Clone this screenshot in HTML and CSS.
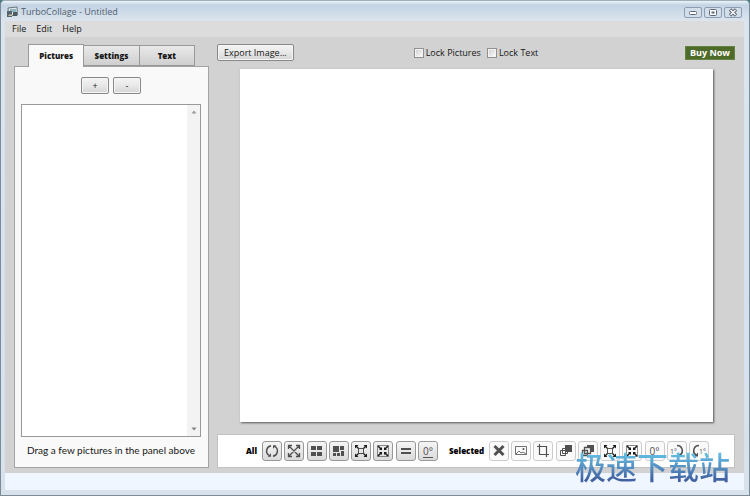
FILE: index.html
```
<!DOCTYPE html>
<html lang="en">
<head>
<meta charset="utf-8">
<title>TurboCollage - Untitled</title>
<link rel="stylesheet" href="styles.css">
</head>
<body>
<svg class="defs" aria-hidden="true">
  <symbol id="expand" viewBox="0 0 20 20">
    <path fill="none" stroke="currentColor" stroke-opacity=".75" d="M7.500 7.500h5v5h-5z"/>
    <path stroke="currentColor" stroke-width="1.300" d="M7.500 7.500L5 5M12.500 7.500L15 5M7.500 12.500L5 15M12.500 12.500L15 15"/>
    <path fill="currentColor" d="M4 4h3.500L4 7.500zM16 4v3.500L12.500 4zM4 16v-3.500L7.500 16zM16 16h-3.500l3.500-3.500z"/>
  </symbol>
  <symbol id="fit" viewBox="0 0 20 20">
    <path d="M4.500 4.500h11v11h-11z" fill="none" stroke="currentColor" stroke-opacity=".5"/>
    <path d="M5 5l3 3M15 5l-3 3M5 15l3-3M15 15l-3-3" stroke="currentColor" stroke-width="1.500"/>
    <path fill="currentColor" d="M9 9H6l3-3zM11 9V6l3 3zM9 11v3l-3-3zM11 11h3l-3 3z"/>
  </symbol>
</svg>
<div class="window">
  <header class="titlebar">
    <svg class="logo" viewBox="0 0 12 12"><path d="M2 2l9-1 .5 8-9 1z" fill="#dfe6e8" stroke="#66747c"/><path d="M4 3h6v3H4z" fill="#8fb5c5"/><path d="M1 5h5v6H1z" fill="#53646b"/><path d="M2 10l2-2 1 1 1-1v2z" fill="#d0c0a8"/><path d="M7 6h4v4H7z" fill="#4b5b61"/></svg>
    <h1 class="title">TurboCollage - Untitled</h1>
    <div class="controls">
      <button class="control" aria-label="Minimize"><svg viewBox="0 0 16 9"><rect x="4.500" y="3.500" width="7" height="3" rx="1" fill="#fff" stroke="#5f6878"/></svg></button>
      <button class="control" aria-label="Maximize"><svg viewBox="0 0 16 9"><rect x="4.500" y="1.500" width="7" height="6" rx="1" fill="#fff" stroke="#5f6878"/><rect x="7" y="4" width="2" height="1" fill="#fff" stroke="#5f6878"/></svg></button>
      <button class="control" aria-label="Close"><svg viewBox="0 0 16 9"><path d="M5 1.500l6 6M11 1.500l-6 6" stroke="#5f6878" stroke-width="3.400"/><path d="M5.500 2l5 5M10.500 2l-5 5" stroke="#fff" stroke-width="1.400"/></svg></button>
    </div>
  </header>
  <nav class="menubar">
    <button class="menu">File</button><button class="menu">Edit</button><button class="menu">Help</button>
  </nav>
  <main class="workspace">
    <section class="sidebar">
      <div class="tabs" role="tablist">
        <button class="tab active" role="tab" aria-selected="true">Pictures</button>
        <button class="tab" role="tab" aria-selected="false">Settings</button>
        <button class="tab" role="tab" aria-selected="false">Text</button>
      </div>
      <div class="panel">
        <div class="edit">
          <button class="push small" aria-label="Add picture">+</button>
          <button class="push small" aria-label="Remove picture">-</button>
        </div>
        <div class="list">
          <div class="scroll">
            <svg viewBox="0 0 6 4"><path d="M.5 3.500L3 .500l2.500 3z" fill="#9a9a9a"/></svg>
            <svg viewBox="0 0 6 4"><path d="M.5.500L3 3.500 5.500.500z" fill="#808080"/></svg>
          </div>
        </div>
        <p class="hint">Drag a few pictures in the panel above</p>
      </div>
    </section>
    <section class="editor">
      <div class="actions">
        <button class="push">Export Image...</button>
        <div class="locks">
          <label class="lock"><input type="checkbox">Lock Pictures</label>
          <label class="lock"><input type="checkbox">Lock Text</label>
        </div>
        <button class="buy">Buy Now</button>
      </div>
      <div class="canvas"></div>
      <div class="toolbar">
        <span class="caption all">All</span>
        <div class="tools">
          <button class="tool" aria-label="Shuffle"><svg viewBox="0 0 20 20"><path d="M9 4.700A5.400 5.400 0 0 0 7 14.500M11 15.300A5.400 5.400 0 0 0 13 5.500" fill="none" stroke="currentColor" stroke-width="1.500"/><path d="M5.500 15.800H9v-3.500zM14.500 4.200H11v3.500z" fill="currentColor"/></svg></button>
          <button class="tool" aria-label="Scatter"><svg viewBox="0 0 20 20"><path d="M5 5l10 10M15 5L5 15M4.500 8V4.500H8M12 4.500h3.500V8M4.500 12v3.500H8M12 15.500h3.500V12" fill="none" stroke="currentColor" stroke-width="1.300"/></svg></button>
          <button class="tool" aria-label="Grid"><svg viewBox="0 0 20 20"><path d="M4 5h5v4H4zM10 5h5v4h-5zM4 11h5v4H4zM10 11h5v4h-5z" fill="currentColor"/></svg></button>
          <button class="tool" aria-label="Mosaic"><svg viewBox="0 0 20 20"><path d="M4 5h6v6H4zM11 5h4v4h-4zM4 12h3v3H4zM8 12h3v3H8zM12 10h3v5h-3z" fill="currentColor"/></svg></button>
          <button class="tool dark" aria-label="Expand all"><svg><use href="#expand"/></svg></button>
          <button class="tool dark" aria-label="Fit all"><svg><use href="#fit"/></svg></button>
          <button class="tool" aria-label="Equalize"><svg viewBox="0 0 20 20"><path d="M5 7h10v2H5zM5 11h10v2H5z" fill="currentColor"/></svg></button>
          <button class="tool angle" aria-label="Reset rotation of all"><span>0°</span></button>
        </div>
        <span class="caption second">Selected</span>
        <div class="tools flat">
          <button class="tool" aria-label="Delete"><svg viewBox="0 0 20 20"><path d="M5.500 5l9 9M14.500 5l-9 9" stroke="currentColor" stroke-width="3"/></svg></button>
          <button class="tool" aria-label="Replace picture"><svg viewBox="0 0 20 20"><path d="M4.500 5.500h11v8h-11zM5 13l3-3 2 2 2-1 3 2" fill="none" stroke="currentColor" stroke-opacity=".8"/><circle cx="12.500" cy="8" r="1" fill="currentColor"/></svg></button>
          <button class="tool" aria-label="Crop"><svg viewBox="0 0 20 20"><path d="M6.500 3v10.500H16M4 5.500h9.500V16" fill="none" stroke="currentColor" stroke-width="1.200"/></svg></button>
          <button class="tool" aria-label="Bring to front"><svg viewBox="0 0 20 20"><path d="M4.500 9.500h5v5h-5zM6.500 7.500h5v5h-5z" fill="#fff" stroke="currentColor"/><rect x="9" y="4" width="7" height="7" fill="currentColor"/></svg></button>
          <button class="tool" aria-label="Send to back"><svg viewBox="0 0 20 20"><rect x="9" y="4" width="7" height="7" fill="currentColor"/><path d="M6.500 6.500h6v6h-6zM4.500 9.500h5v5h-5z" fill="#fff" stroke="currentColor" stroke-width="1.300"/></svg></button>
          <button class="tool dark" aria-label="Expand selected"><svg><use href="#expand"/></svg></button>
          <button class="tool dark" aria-label="Fit selected"><svg><use href="#fit"/></svg></button>
          <button class="tool angle" aria-label="Reset rotation"><span>0°</span></button>
          <button class="tool" aria-label="Rotate clockwise"><svg viewBox="0 0 20 20"><path d="M10 4.500a5.200 5.200 0 0 1 3 9.500" fill="none" stroke="currentColor" stroke-width="1.600"/><path d="M11 11.500v4h4z" fill="currentColor"/><text x="3" y="13" class="degree">1°</text></svg></button>
          <button class="tool" aria-label="Rotate counterclockwise"><svg viewBox="0 0 20 20"><path d="M10 4.500a5.200 5.200 0 0 0-3 9.500" fill="none" stroke="currentColor" stroke-width="1.600"/><path d="M9 11.500v4H5z" fill="currentColor"/><text x="10" y="13" class="degree">1°</text></svg></button>
        </div>
      </div>
    </section>
  </main>
  <footer class="status"></footer>
  <div class="watermark" lang="zh-CN">极速下载站</div>
</div>
</body>
</html>
```
FILE: styles.css
```
* { box-sizing: border-box; }
body {
  margin: 0;
  background: #4b7d82;
  color: #161616;
  font: 9px/12px "Open Sans", "Noto Sans CJK SC", sans-serif;
}
button { margin: 0; padding: 0; color: inherit; font: inherit; }
svg { display: block; }
.defs { position: absolute; width: 0; height: 0; }

.window {
  position: relative;
  display: flex;
  flex-direction: column;
  min-height: 100vh;
  padding: 0 5px 5px 4px;
  border: 1px solid #7c8b98;
  border-top-color: #a3adb5;
  border-radius: 5px 5px 0 0;
  background: linear-gradient(#c8d8e7, #dae5ef 20px, #d5e2ee 60%, #d8e1ec);
}
.titlebar {
  display: flex;
  align-items: center;
  height: 20px;
  margin: 0 -5px 0 -4px;
  padding: 2px 7px 0 5px;
  border-radius: 4px 4px 0 0;
  background: linear-gradient(#edf4fa, #c3d3e4 4px, #dce5ee);
}
.logo { width: 12px; height: 12px; }
.title { flex: 1; margin: 0 3px; color: #51606e; font-size: 9px; font-weight: 400; }
.controls { display: flex; gap: 2px; }
.control {
  width: 18px;
  height: 11px;
  border: 1px solid #8d9cb1;
  border-radius: 2px;
  background: #d3deeb;
}
.control svg { width: 16px; height: 9px; }

.menubar { display: flex; gap: 10px; height: 16px; padding: 0 7px; background: #dcdcdc; }
.menu { border: 0; background: none; line-height: 12px; }

.workspace {
  flex: 1;
  display: flex;
  gap: 8px;
  padding: 7px 9px 5px 9px;
  background: #d2d2d2;
}
.sidebar { flex: 0 0 195px; display: flex; flex-direction: column; }
.tabs { display: flex; align-items: flex-end; height: 23px; padding: 0 14px; z-index: 1; }
.tab {
  flex: 1;
  height: 21px;
  margin-bottom: 1px;
  border: 1px solid #999;
  border-left: 0;
  background: linear-gradient(#e9e9e9, #cfcfcf);
  font-size: 8px;
  font-weight: 800;
}
.tab.active { height: 23px; margin: 0; border-left: 1px solid #999; border-bottom: 0; background: #f9f9f9; }
.panel {
  flex: 1;
  display: flex;
  flex-direction: column;
  margin-top: -1px;
  padding: 10px 7px 11px 6px;
  border: 1px solid #a3a3a3;
  background: #f9f9f9;
}
.edit { display: flex; justify-content: center; gap: 4px; }
.push {
  height: 17px;
  padding: 0 6px;
  border: 1px solid #888;
  border-radius: 2px;
  background: linear-gradient(#f4f4f4, #e8e8e8 50%, #d5d5d5);
  box-shadow: inset 0 0 0 1px #f5f5f5;
  line-height: 14px;
}
.small { width: 28px; }
.list {
  flex: 1;
  display: flex;
  justify-content: flex-end;
  margin-top: 10px;
  border: 1px solid #999;
  background: #fff;
}
.scroll {
  display: flex;
  flex-direction: column;
  justify-content: space-between;
  align-items: center;
  width: 13px;
  padding: 5px 0;
  background: #f3f3f3;
}
.scroll svg { width: 6px; height: 4px; }
.hint { margin: 7px 0 0; font-family: Lato, sans-serif; font-size: 10px; text-align: center; white-space: nowrap; }

.editor { flex: 1; display: flex; flex-direction: column; min-width: 0; }
.actions {
  display: grid;
  grid-template-columns: 1fr auto 1fr;
  align-items: center;
  height: 17px;
}
.actions .push { justify-self: start; }
.locks { display: flex; gap: 6px; }
.lock { display: flex; align-items: center; gap: 2px; }
.lock input {
  appearance: none;
  width: 10px;
  height: 10px;
  margin: 0;
  border: 1px solid #919191;
  background: linear-gradient(135deg, #ccc, #fff);
  box-shadow: inset 0 0 0 1px #f3f3f3;
}
.buy {
  justify-self: end;
  height: 14px;
  padding: 0 4px;
  border: 1px solid #648043;
  background: #4f6b2a;
  color: #fff;
  font-weight: 700;
  line-height: 12px;
}
.canvas { flex: 1; margin: 8px 22px 12px 23px; background: #fff; box-shadow: 1px 1px 2px #555; }
.toolbar {
  display: flex;
  align-items: center;
  height: 34px;
  padding-left: 28px;
  border: 1px solid #c2c2c2;
  background: #fff;
}
.caption { width: 35px; margin-right: 5px; color: #000; font-size: 8px; font-weight: 800; }
.all { width: 11px; }
.second { margin-left: 11px; }
.tools { display: flex; justify-content: space-between; width: 176px; }
.tools.flat { width: 220px; }
.tool {
  width: 20px;
  height: 20px;
  border: 1px solid #989898;
  border-radius: 3px;
  background: linear-gradient(#f5f5f5, #dadada);
  color: #505050;
}
.tool svg { width: 20px; height: 20px; margin: -1px; }
.flat .tool { border-color: #ccc; background: #fafafa; }
.tool.dark { color: #1b1b1b; }
.angle { font-size: 10px; line-height: 12px; }
.angle span { display: inline-block; height: 13px; border-bottom: 1px solid #555; }
.degree { fill: #555; font-size: 7px; }
.status { height: 17px; background: #eff6ff; }
.watermark {
  position: absolute;
  right: 19px;
  bottom: 12px;
  background: linear-gradient(#61bde2 15%, #5794c6 50%, #4161a0 90%);
  background-clip: text;
  color: transparent;
  font: 500 31px/34px "Noto Sans CJK SC", sans-serif;
  pointer-events: none;
}
```
